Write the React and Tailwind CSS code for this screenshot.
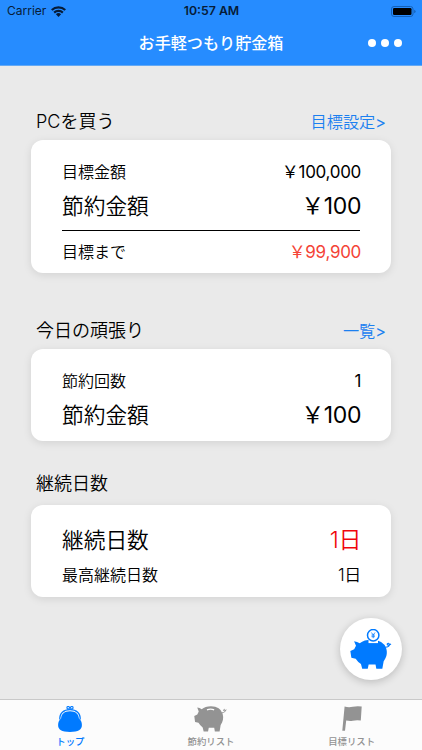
import clsx from 'clsx';

// ── Icons ─────────────────────────────────────────────────────────────────────
const WifiIcon = () => (
  <svg className="h-[11px] w-[15px]" viewBox="0 0 15 11" fill="currentColor" aria-hidden="true">
    <path d="M0 3.2a10.8 10.8 0 0 1 15 0l-1.5 1.6a8.7 8.7 0 0 0-12 0z" />
    <path d="M2.4 5.8a7.4 7.4 0 0 1 10.2 0l-1.5 1.6a5.3 5.3 0 0 0-7.2 0z" />
    <path d="M4.9 8.3a3.8 3.8 0 0 1 5.2 0L7.5 11z" />
  </svg>
);

const BatteryIcon = () => (
  <svg className="h-[11px] w-[25px]" viewBox="0 0 25 11" aria-hidden="true">
    <rect x="0.5" y="0.5" width="21.5" height="10" rx="2.5" fill="none" stroke="#1461b8" />
    <rect x="2" y="2" width="18.5" height="7" rx="1.2" fill="#000" />
    <path d="M23.2 3.8q1.4.4 1.4 1.7t-1.4 1.7z" fill="#1461b8" />
  </svg>
);

const PurseIcon = () => (
  <svg className="h-[26px] w-6" viewBox="0 0 24 26" fill="none" stroke="currentColor" aria-hidden="true">
    <circle cx="10.2" cy="1.8" r="1.3" strokeWidth="1.1" />
    <circle cx="13.8" cy="1.8" r="1.3" strokeWidth="1.1" />
    <path d="M1.8 13.5C1.5 7 5.600 3.700 12 3.700S22.500 7 22.200 13.500" strokeWidth="1.3" />
    <path
      d="M12 5.300C17.600 5.300 20.700 8 20.900 12.600C22.900 14.200 23.900 16.500 23.900 19C23.900 23.800 20.500 25.900 12 25.900S.1 23.800.1 19C.1 16.500 1.100 14.200 3.100 12.600C3.300 8 6.400 5.300 12 5.300Z"
      fill="currentColor"
      stroke="none"
    />
  </svg>
);

const PigBody = () => (
  <path
    d="M3.6 1.600Q6.400 1.900 8.600 3.600Q12.500 .3 19 .3Q29.500 .5 32 8.300C33.400 13 32.300 17 29.800 20.500Q29.400 23 28.600 27.500H23.300L22.600 23.500H16.500L15.700 27.500H10.800L9.700 23.200Q6.800 21 5 18.100L1.200 17.200L.3 10.900L3.700 9.200L5.300 6Z"
    fill="currentColor"
  />
);

const PigTail = () => (
  <path
    d="M31 7.300Q35.200 7.100 34.900 4.500Q34.200 2.700 33 4.200Q32.700 6.400 36.300 4.200"
    fill="none"
    stroke="currentColor"
    strokeWidth="1"
  />
);

const PigIcon = () => (
  <svg className="h-[26px] w-[34px]" viewBox="0 0 38 28" preserveAspectRatio="none" aria-hidden="true">
    <PigBody />
    <PigTail />
    <path d="M14.5 4.200Q18.500 2.600 22.500 4.200" fill="none" stroke="#fcfcfc" strokeWidth="1.5" />
  </svg>
);

const PigCoinIcon = () => (
  <svg className="h-[41px] w-[42px]" viewBox="0 0 42 41" aria-hidden="true" color="#007aff">
    <g transform="translate(0 10.500) scale(1.13 1.06)">
      <PigBody />
      <PigTail />
    </g>
    <path d="M18.500 10.500h9.500v3.600h-9.500z" fill="#fff" />
    <circle cx="23.200" cy="6.200" r="5.700" fill="#fff" stroke="currentColor" strokeWidth="1.500" />
    <path
      d="M21.400 3.500l1.800 2.500L25 3.500M23.200 6v3.200M21.500 6.100h3.400M21.500 7.700h3.400"
      fill="none"
      stroke="currentColor"
      strokeWidth=".8"
    />
  </svg>
);

const FlagIcon = () => (
  <svg className="h-[25px] w-5" viewBox="0 0 20 25" fill="currentColor" aria-hidden="true">
    <path d="M2.600.500Q6.500 1.800 10.800.800Q15 0 19.700.600L18.800 14.600Q14.500 14 10.800 14.800Q7.500 15.300 4.200 14.500L3 24.700H.300Z" />
  </svg>
);

// ── Building blocks ───────────────────────────────────────────────────────────
const SectionTitle = ({ title, link, className }) => (
  <div className={clsx('flex h-6 items-center justify-between pr-9 pl-9', className)}>
    <h2 className="text-[18px] leading-6 font-[350]">{title}</h2>
    {link && (
      <a className="text-[16.200px] leading-6 font-[350] text-[#1c80f0]">
        {link}
        <span className="font-normal">&gt;</span>
      </a>
    )}
  </div>
);

const Card = ({ className, children }) => (
  <div
    className={clsx(
      'mx-[31px] flex flex-col rounded-xl bg-white px-[31px] shadow-[0_2px_8px_rgba(0,0,0,0.1)]',
      className
    )}
  >
    {children}
  </div>
);

const Row = ({ label, value, large, className, valueClassName }) => (
  <div className={clsx('flex items-center justify-between font-[350]', large ? 'h-9' : 'h-7', className)}>
    <span className={large ? 'text-[21.700px]' : 'text-[16px]'}>{label}</span>
    <span
      className={clsx(
        '-mr-px pt-px',
        large ? 'text-[23px] tracking-[-0.4px]' : 'text-[17px] tracking-[-0.3px]',
        valueClassName
      )}
    >
      {value}
    </span>
  </div>
);

// Amounts use the full-width yen sign
const yen = (amount) => `\uFFE5${amount.toLocaleString('en-US')}`;

const TABS = [
  { label: 'トップ', Icon: PurseIcon, active: true },
  { label: '節約リスト', Icon: PigIcon },
  { label: '目標リスト', Icon: FlagIcon },
];

const App = () => (
  <div className="relative flex h-[750px] w-[422px] flex-col overflow-hidden bg-[#eaeaea] font-['Inter','Noto_Sans_CJK_JP',sans-serif] text-black">
    {/* Status bar + navigation */}
    <header className="h-[66px] shrink-0 border-b border-[#64a9f4] bg-[#268cff]">
      <div className="grid h-[22px] grid-cols-3 items-center pr-[6px] pl-[7px] text-[#061c38]">
        <div className="flex items-center gap-[5px] text-[12px]">
          Carrier
          <WifiIcon />
        </div>
        <span className="text-center text-[12.300px] font-semibold">10:57 AM</span>
        <div className="flex justify-end">
          <BatteryIcon />
        </div>
      </div>
      <div className="grid h-[43px] grid-cols-[1fr_auto_1fr] items-center">
        <h1 className="col-start-2 text-[16.100px] font-medium text-white">お手軽つもり貯金箱</h1>
        <div className="flex -translate-y-px justify-end gap-[5px] pr-5">
          <span className="size-2 rounded-full bg-white" />
          <span className="size-2 rounded-full bg-white" />
          <span className="size-2 rounded-full bg-white" />
        </div>
      </div>
    </header>

    <main className="flex-1">
      <SectionTitle title="PCを買う" link="目標設定" className="mt-[44px]" />
      <Card className="mt-[6px] h-[133px] pt-[18px]">
        <Row label="目標金額" value={yen(100000)} valueClassName="font-normal" />
        <Row label="節約金額" value={yen(100)} large className="mt-[2px]" valueClassName="font-normal" />
        <div className="mt-[6px] border-t border-black" />
        <Row label="目標まで" value={yen(99900)} className="mt-[7px]" valueClassName="text-[#f44336] font-normal" />
      </Card>

      <SectionTitle title="今日の頑張り" link="一覧" className="mt-[46px]" />
      <Card className="mt-[6px] h-[92px] pt-[18px]">
        <Row label="節約回数" value="1" valueClassName="font-normal" />
        <Row label="節約金額" value={yen(100)} large className="mt-[2px]" valueClassName="font-normal" />
      </Card>

      <SectionTitle title="継続日数" className="mt-[31px]" />
      <Card className="mt-[9px] h-[92px] pt-[17px]">
        <Row label="継続日数" value="1日" large valueClassName="text-[#f0060c]" />
        <Row label="最高継続日数" value="1日" className="mt-[3px]" />
      </Card>
    </main>

    {/* Floating action button */}
    <button
      type="button"
      className="absolute top-[618px] left-[340px] flex size-[62px] items-center justify-center rounded-full bg-white shadow-[0_2px_8px_rgba(0,0,0,0.2)]"
      aria-label="節約"
    >
      <PigCoinIcon />
    </button>

    <nav className="grid h-[51px] shrink-0 grid-cols-3 border-t border-[#c9c9c9] bg-[#fcfcfc]">
      {TABS.map(({ label, Icon, active }) => (
        <div
          key={label}
          className={clsx('flex flex-col items-center pt-[6px]', active ? 'text-[#007aff]' : 'text-[#939393]')}
        >
          <div className="flex h-[27px] items-start">
            <Icon />
          </div>
          <span className="mt-[2px] text-[9.400px] leading-[14px] font-medium">{label}</span>
        </div>
      ))}
    </nav>
  </div>
);

export default App;
